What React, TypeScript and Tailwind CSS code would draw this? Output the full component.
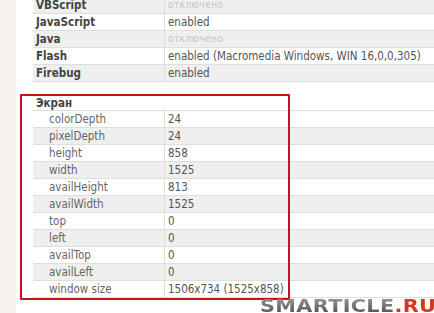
const top = [
  { k: 'VBScript', v: 'отключено', off: true },
  { k: 'JavaScript', v: 'enabled' },
  { k: 'Java', v: 'отключено', off: true },
  { k: 'Flash', v: 'enabled (Macromedia Windows, WIN 16,0,0,305)' },
  { k: 'Firebug', v: 'enabled' },
]

const screen = [
  ['colorDepth', '24'],
  ['pixelDepth', '24'],
  ['height', '858'],
  ['width', '1525'],
  ['availHeight', '813'],
  ['availWidth', '1525'],
  ['top', '0'],
  ['left', '0'],
  ['availTop', '0'],
  ['availLeft', '0'],
  ['window size', '1506x734 (1525x858)'],
]

function Row({ label, value, gray, off, indent }: {
  label: string
  value: string
  gray: boolean
  off?: boolean
  indent?: boolean
}) {
  return (
    <div className={`flex h-[17px] border-b border-[#dedede] ${gray ? 'bg-[#efefef]' : 'bg-white'}`}>
      <div
        className={`w-[132px] shrink-0 border-r border-[#dedede] leading-[16px] ${
          indent ? 'pl-4 text-[#666]' : 'pl-[3px] font-bold text-[#444]'
        }`}
      >
        {label}
      </div>
      <div className={`pl-[3px] leading-[16px] whitespace-nowrap ${off ? 'text-[#c4c4c4] text-[10px] tracking-[0.4px]' : 'text-[#555]'}`}>
        {value}
      </div>
    </div>
  )
}

export default function App() {
  return (
    <div
      className="relative flex w-[434px] h-[313px] overflow-hidden bg-[#f6f3ee] text-[11.5px]"
      style={{ fontFamily: '"DejaVu Sans Condensed", "DejaVu Sans", sans-serif' }}
    >
      <div className="w-4 shrink-0" />
      <div className="flex-1 bg-white pl-[17px]">
        <div className="mt-[-3px]">
          {top.map((r, i) => (
            <Row key={r.k} label={r.k} value={r.v} off={r.off} gray={i % 2 === 0} />
          ))}
        </div>
        <div className="mt-[14px]">
          <div className="h-[15px] border-b border-[#dedede] pl-[3px] font-bold text-[#444] leading-[14px]">Экран</div>
          {screen.map(([k, v], i) => (
            <Row key={k} label={k} value={v} indent gray={i % 2 === 1} />
          ))}
        </div>
      </div>

      {/* red annotation frame */}
      <div className="absolute left-[20px] top-[94px] w-[270px] h-[206px] border-2 border-[#c4121e] rounded-[1px]" />

      <div
        className="absolute left-[260px] top-[298px] origin-left scale-x-[1.22] text-[17px] font-bold leading-none tracking-[0.3px] whitespace-nowrap"
        style={{ fontFamily: '"DejaVu Sans", sans-serif' }}
      >
        <span className="bg-gradient-to-b from-[#a0a0a0] to-[#4a4a4a] bg-clip-text text-transparent">SMARTICLE</span>
        <span className="text-[#d23a1e]">.RU</span>
      </div>
    </div>
  )
}
